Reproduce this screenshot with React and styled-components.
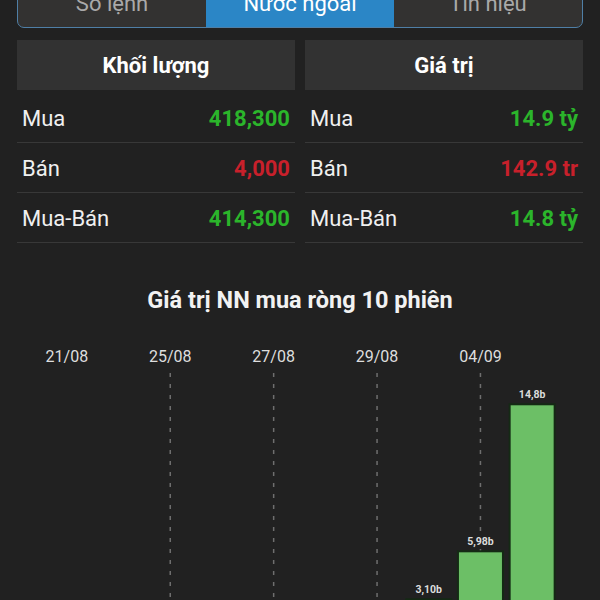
import React from "react";
import styled, { createGlobalStyle } from "styled-components";

const Global = createGlobalStyle`
  html, body { margin: 0; padding: 0; background: #212121; }
  body { overflow: hidden; font-family: Roboto, "Noto Sans", "Liberation Sans", sans-serif; }
`;

const Page = styled.div`
  width: 600px;
  height: 600px;
  overflow: hidden;
  background: #212121;
  color: #f0f0f0;
`;

const Inner = styled.div`
  padding: 0 17px;
  margin-top: -9px;
`;

const TabBar = styled.div`
  display: grid;
  grid-template-columns: repeat(3, 1fr);
  height: 35px;
  border: 1px solid #4f7fa6;
  border-radius: 7px;
  overflow: hidden;
  background: #333231;
`;

const Tab = styled.div`
  display: flex;
  align-items: center;
  justify-content: center;
  font-size: 22px;
  line-height: 1;
  padding-bottom: 12px;
  color: ${(p) => (p.$active ? "#ffffff" : "#a9a9a9")};
  background: ${(p) => (p.$active ? "#2b86c6" : "transparent")};
`;

const Columns = styled.div`
  display: grid;
  grid-template-columns: 1fr 1fr;
  column-gap: 10px;
  margin-top: 12px;
`;

const Column = styled.div`
  display: flex;
  flex-direction: column;
`;

const Header = styled.div`
  height: 50px;
  background: #323232;
  display: flex;
  align-items: center;
  justify-content: center;
  font-weight: 700;
  font-size: 22px;
  color: #ffffff;
  margin-bottom: 3px;
`;

const Row = styled.div`
  box-sizing: border-box;
  height: 50px;
  border-bottom: 1px solid #383838;
  display: flex;
  align-items: center;
  justify-content: space-between;
  padding: 2px 5px 0;
`;

const Label = styled.span`
  font-size: 22px;
  color: #f0f0f0;
`;

const Value = styled.span`
  font-size: 22px;
  font-weight: 700;
  color: ${(p) => (p.$tone === "down" ? "#c8202b" : "#2bb52b")};
`;

const Title = styled.div`
  margin-top: 45px;
  text-align: center;
  font-weight: 700;
  font-size: 23.5px;
  color: #f2f2f2;
  line-height: 24px;
`;

const ChartSvg = styled.svg`
  display: block;
  margin-top: 17px;
`;

const volume = [
  ["Mua", "418,300", "up"],
  ["Bán", "4,000", "down"],
  ["Mua-Bán", "414,300", "up"],
];
const value = [
  ["Mua", "14.9 tỷ", "up"],
  ["Bán", "142.9 tr", "down"],
  ["Mua-Bán", "14.8 tỷ", "up"],
];

const bars = [
  { d: "21/08", v: 0.85, l: "0,85b" },
  { d: "22/08", v: 1.4, l: "1,40b" },
  { d: "25/08", v: 0.42, l: "0,42b" },
  { d: "26/08", v: 1.9, l: "1,90b" },
  { d: "27/08", v: 0.6, l: "0,60b" },
  { d: "28/08", v: 1.2, l: "1,20b" },
  { d: "29/08", v: 2.05, l: "2,05b" },
  { d: "03/09", v: 3.1, l: "3,10b" },
  { d: "04/09", v: 5.98, l: "5,98b" },
  { d: "05/09", v: 14.8, l: "14,8b" },
];

function Chart() {
  const left = 41;
  const slot = 51.7;
  const base = 322;
  const k = 16.67;
  const bw = 45;
  return (
    <ChartSvg width="600" height="340" viewBox="0 0 600 340">
      {bars.map((b, i) => {
        const cx = left + slot * (i + 0.5);
        return i % 2 === 0 ? (
          <g key={"d" + i}>
            <text
              x={cx}
              y={33}
              textAnchor="middle"
              fontSize="16"
              fill="#dedede"
              fontFamily="Roboto, sans-serif"
            >
              {b.d}
            </text>
            {i > 0 && (
              <line
                x1={cx}
                x2={cx}
                y1={44}
                y2={340}
                stroke="#6e6e6e"
                strokeWidth="1.5"
                strokeDasharray="4 7"
              />
            )}
          </g>
        ) : null;
      })}
      {bars.map((b, i) => {
        const cx = left + slot * (i + 0.5);
        const h = b.v * k;
        const top = base - h;
        return (
          <g key={"b" + i}>
            <rect
              x={cx - bw / 2}
              y={top}
              width={bw}
              height={h}
              fill="#6cbf66"
              stroke="#142a14"
              strokeWidth="2"
            />
            <text
              x={cx}
              y={top - 6}
              textAnchor="middle"
              fontSize="10.5"
              fontWeight="700"
              fill="#dcdcdc"
              fontFamily="Roboto, sans-serif"
            >
              {b.l}
            </text>
          </g>
        );
      })}
    </ChartSvg>
  );
}

export default function App() {
  return (
    <Page>
      <Global />
      <Inner>
        <TabBar>
          <Tab>Sổ lệnh</Tab>
          <Tab $active>Nước ngoài</Tab>
          <Tab>Tín hiệu</Tab>
        </TabBar>
        <Columns>
          <Column>
            <Header>Khối lượng</Header>
            {volume.map(([l, v, t]) => (
              <Row key={l}>
                <Label>{l}</Label>
                <Value $tone={t}>{v}</Value>
              </Row>
            ))}
          </Column>
          <Column>
            <Header>Giá trị</Header>
            {value.map(([l, v, t]) => (
              <Row key={l}>
                <Label>{l}</Label>
                <Value $tone={t}>{v}</Value>
              </Row>
            ))}
          </Column>
        </Columns>
        <Title>Giá trị NN mua ròng 10 phiên</Title>
      </Inner>
      <Chart />
    </Page>
  );
}
